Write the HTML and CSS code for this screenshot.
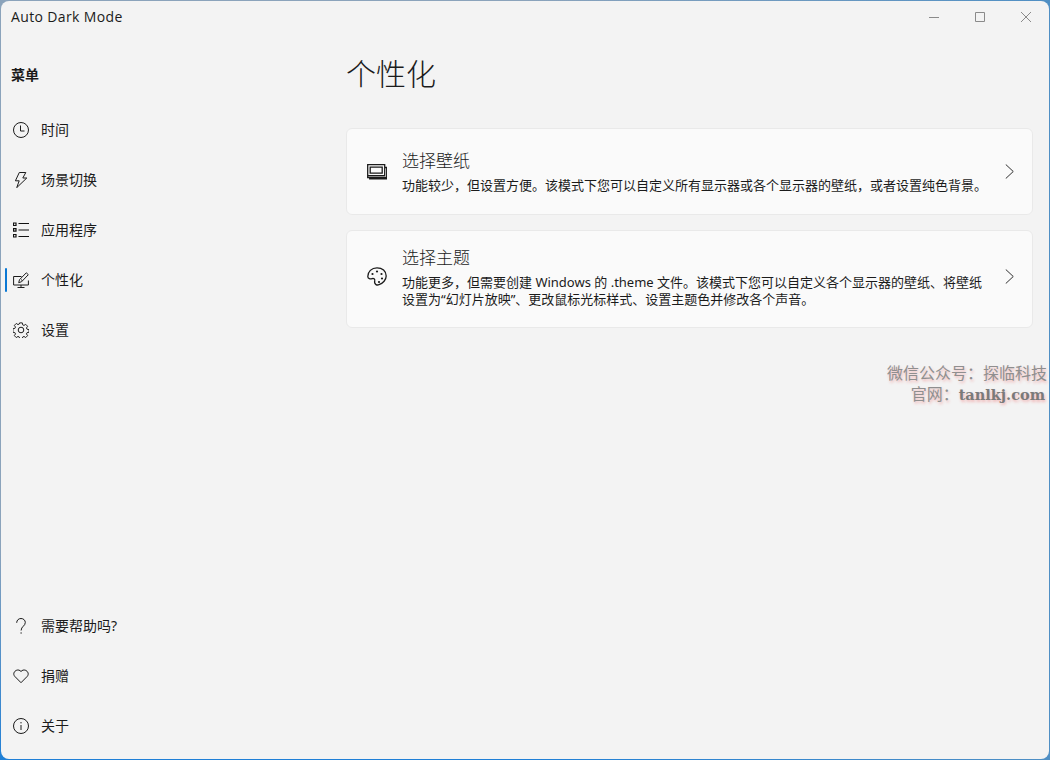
FILE: index.html
```html
<!DOCTYPE html>
<html lang="zh-CN">
<head>
<meta charset="utf-8">
<title>Auto Dark Mode</title>
<link rel="stylesheet" href="styles.css">
</head>
<body>
<div class="window">
  <header class="titlebar">
    <span class="app-title">Auto Dark Mode</span>
    <div class="caption">
      <svg class="cap-icon" viewBox="0 0 10 10"><path d="M0 5.500h10"/></svg>
      <svg class="cap-icon" viewBox="0 0 10 10"><path d="M.5.5h9v9h-9z"/></svg>
      <svg class="cap-icon" viewBox="0 0 10 10"><path d="M0 0l10 10M10 0L0 10"/></svg>
    </div>
  </header>
  <div class="main">
    <aside class="sidebar">
      <div class="menu-label">菜单</div>
      <nav class="nav">
        <a class="nav-item"><svg class="icon" viewBox="0 0 16 16"><circle cx="8" cy="8" r="7.500"/><path d="M7.500 3.500v5.500h4"/></svg><span>时间</span></a>
        <a class="nav-item"><svg class="icon" viewBox="0 0 16 16"><path d="M6.300.5h6.500L9.800 6h4L3.700 15.700 6.200 8.800H2.400z"/></svg><span>场景切换</span></a>
        <a class="nav-item"><svg class="icon icon-strong" viewBox="0 0 16 16"><path d="M.5 1h2.500v2.500H.5zM.5 6.700h2.500v2.500H.5zM.5 12.500h2.500v2.500H.5zM5.500 1.500H16M5.500 8H16M5.500 14.500H16"/></svg><span>应用程序</span></a>
        <a class="nav-item active"><svg class="icon" viewBox="0 0 16 16"><path d="M8.500 4.500H.6v8.500h14.800V8.500M8 13v2.500M4.500 15.500h7M5.700 10.700l.8-3L13.300.8l2 1.900-6.700 7z"/><path d="M8 7.500l1.300 1.200"/></svg><span>个性化</span></a>
        <a class="nav-item"><svg class="icon" viewBox="0 0 16 16"><circle cx="8" cy="8" r="2.800"/><path d="M6.600.6h2.800l.4 2.100 1.300.6 1.800-1.200 2 2-1.200 1.800.6 1.300 2.100.4v2.800l-2.100.4-.6 1.300 1.200 1.800-2 2-1.800-1.200-1.300.6-.4 2.100H6.600l-.4-2.100-1.300-.6-1.800 1.200-2-2 1.200-1.800-.6-1.300-2.100-.4V6.700l2.100-.4.6-1.300L1.100 3.200l2-2 1.800 1.200 1.300-.6z" transform="translate(.3 .3) scale(.96)"/></svg><span>设置</span></a>
      </nav>
      <nav class="nav nav-bottom">
        <a class="nav-item"><svg class="icon" viewBox="0 0 16 16"><path d="M3.700 4.800C3.700 2.300 5.500.5 8 .5s4.300 1.800 4.300 4c0 3.500-4.200 4-4.200 8M8.100 14.300v1.400"/></svg><span>需要帮助吗?</span></a>
        <a class="nav-item"><svg class="icon" viewBox="0 0 16 16"><path d="M8 14.700L1.700 8.300C-1.500 4.500 4.500-.6 8 3.500c3.500-4.100 9.500 1 6.300 4.800z"/></svg><span>捐赠</span></a>
        <a class="nav-item"><svg class="icon" viewBox="0 0 16 16"><circle cx="8" cy="8" r="7.500"/><path d="M8 7v5M8 4v1.400"/></svg><span>关于</span></a>
      </nav>
    </aside>
    <main class="content">
      <h1 class="page-title">个性化</h1>
      <section class="card card-a">
        <svg class="card-icon" viewBox="0 0 20 20"><path d="M.7 2.700h17v11h-17zM3.200 5.200h12v6h-12zM.7 13.700v1.800h19v-10h-2M2.700 15.500v1.300h17v-1.300"/></svg>
        <div class="card-text">
          <div class="card-title">选择壁纸</div>
          <div class="card-desc">功能较少，但设置方便。该模式下您可以自定义所有显示器或各个显示器的壁纸，或者设置纯色背景。</div>
        </div>
        <svg class="chevron" viewBox="0 0 9 16"><path d="M.5.5L8.500 8 .5 15.500"/></svg>
      </section>
      <section class="card card-b">
        <svg class="card-icon" viewBox="0 0 20 20"><path d="M10 .8C4.500.8.800 4.700.8 9.500c0 2.300 2.700 2.700 4.200 2.200 1.800-.6 3 .3 2.700 2-.3 1.500-.3 2.900 1.300 3.900 1 .6 2 .5 3 .1 4-1.300 7.200-4.900 7.200-8.700C19.200 4.200 15.300.8 10 .8z"/><circle class="dot" cx="5.500" cy="7" r="1.100"/><circle class="dot" cx="10" cy="4.500" r="1.100"/><circle class="dot" cx="14.500" cy="7" r="1.100"/><circle class="dot" cx="15" cy="11.500" r="1.100"/><circle class="dot" cx="12" cy="15" r="1.100"/></svg>
        <div class="card-text">
          <div class="card-title">选择主题</div>
          <div class="card-desc">功能更多，但需要创建 Windows 的 .theme 文件。该模式下您可以自定义各个显示器的壁纸、将壁纸设置为“幻灯片放映”、更改鼠标光标样式、设置主题色并修改各个声音。</div>
        </div>
        <svg class="chevron" viewBox="0 0 9 16"><path d="M.5.5L8.500 8 .5 15.500"/></svg>
      </section>
    </main>
  </div>
  <div class="watermark">
    <div>微信公众号：探临科技</div>
    <div class="wm-second">官网：<b class="wm-latin">tanlkj.com</b></div>
  </div>
</div>
</body>
</html>
```
FILE: styles.css
```css
* { box-sizing: border-box; }
html, body { margin: 0; height: 100%; }
body {
  width: 1050px;
  height: 760px;
  overflow: hidden;
  background:
    linear-gradient(to left, #4f8fc4 0, rgba(79, 143, 196, 0) 50%),
    linear-gradient(to bottom, #8ba3bb 0, #8ba3bb 72%, #1f7fd6 100%);
  font-family: "Noto Sans", "Noto Sans CJK SC", sans-serif;
  color: #1b1b1b;
}
.window {
  position: relative;
  width: 1048px;
  height: 758px;
  margin: 1px 0 0 1px;
  background: #f3f3f3;
  border-radius: 8px;
  display: flex;
  flex-direction: column;
  overflow: hidden;
}
.titlebar {
  height: 32px;
  flex: none;
  display: flex;
  align-items: flex-start;
  justify-content: space-between;
}
.app-title {
  margin: 6px 0 0 10px;
  font: 14px/20px "Open Sans", "Noto Sans", sans-serif;
  letter-spacing: .37px;
}
.caption {
  display: flex;
  gap: 36px;
  padding: 11px 18px 0 0;
}
.cap-icon {
  width: 10px;
  height: 10px;
  fill: none;
  stroke: #8a8a8a;
  stroke-width: 1;
}
.main { flex: 1; display: flex; min-height: 0; }
.sidebar {
  width: 345px;
  flex: none;
  display: flex;
  flex-direction: column;
  padding-top: 32px;
}
.menu-label {
  padding-left: 10px;
  font-size: 14px;
  line-height: 20px;
  font-weight: 700;
  margin-bottom: 20px;
}
.nav { display: flex; flex-direction: column; }
.nav-bottom { margin-top: auto; padding-bottom: 8px; }
.nav-item {
  position: relative;
  height: 50px;
  display: flex;
  align-items: center;
  gap: 12px;
  padding-left: 12px;
  font-size: 14px;
  line-height: 20px;
}
.nav-item.active::before {
  content: "";
  position: absolute;
  left: 4px;
  top: 13px;
  width: 2px;
  height: 24px;
  border-radius: 1px;
  background: #0a78d4;
}
.icon {
  width: 16px;
  height: 16px;
  flex: none;
  fill: none;
  stroke: #1b1b1b;
  stroke-width: 1;
}
.icon-strong { stroke: #111; stroke-width: 1.200; }
.content {
  flex: 1;
  padding-right: 16px;
  display: flex;
  flex-direction: column;
}
.page-title {
  margin: 0 0 30px;
  height: 65px;
  padding-top: 16px;
  font-size: 30px;
  line-height: 50px;
  font-weight: 300;
}
.card {
  display: flex;
  align-items: center;
  background: #fafafa;
  border: 1px solid #e9e9e9;
  border-radius: 6px;
  padding: 0 18px 0 20px;
}
.card-a { height: 87px; margin-bottom: 15px; }
.card-b { height: 98px; padding-bottom: 5px; }
.card-icon {
  width: 20px;
  height: 20px;
  flex: none;
  fill: none;
  stroke: #1b1b1b;
  stroke-width: 1.300;
  margin-right: 15px;
}
.dot { fill: #1b1b1b; stroke: none; }
.card-text { flex: 1; min-width: 0; }
.card-title { font-size: 17px; line-height: 24px; font-weight: 300; }
.card-desc { font-size: 13px; line-height: 17px; margin-top: 4px; }
.chevron {
  width: 9px;
  height: 15px;
  flex: none;
  margin-left: 11px;
  fill: none;
  stroke: #222;
  stroke-width: 1;
}
.watermark {
  position: absolute;
  right: 2px;
  top: 362px;
  text-align: right;
  font-size: 16px;
  line-height: 21px;
  color: #8f8f8f;
  text-shadow: 1px 2px 3px #f0b4b4;
}
.wm-second { padding-right: 2px; }
.wm-latin {
  font-family: "DejaVu Serif", serif;
  font-size: 14.500px;
  color: #7a7a7a;
}
```
